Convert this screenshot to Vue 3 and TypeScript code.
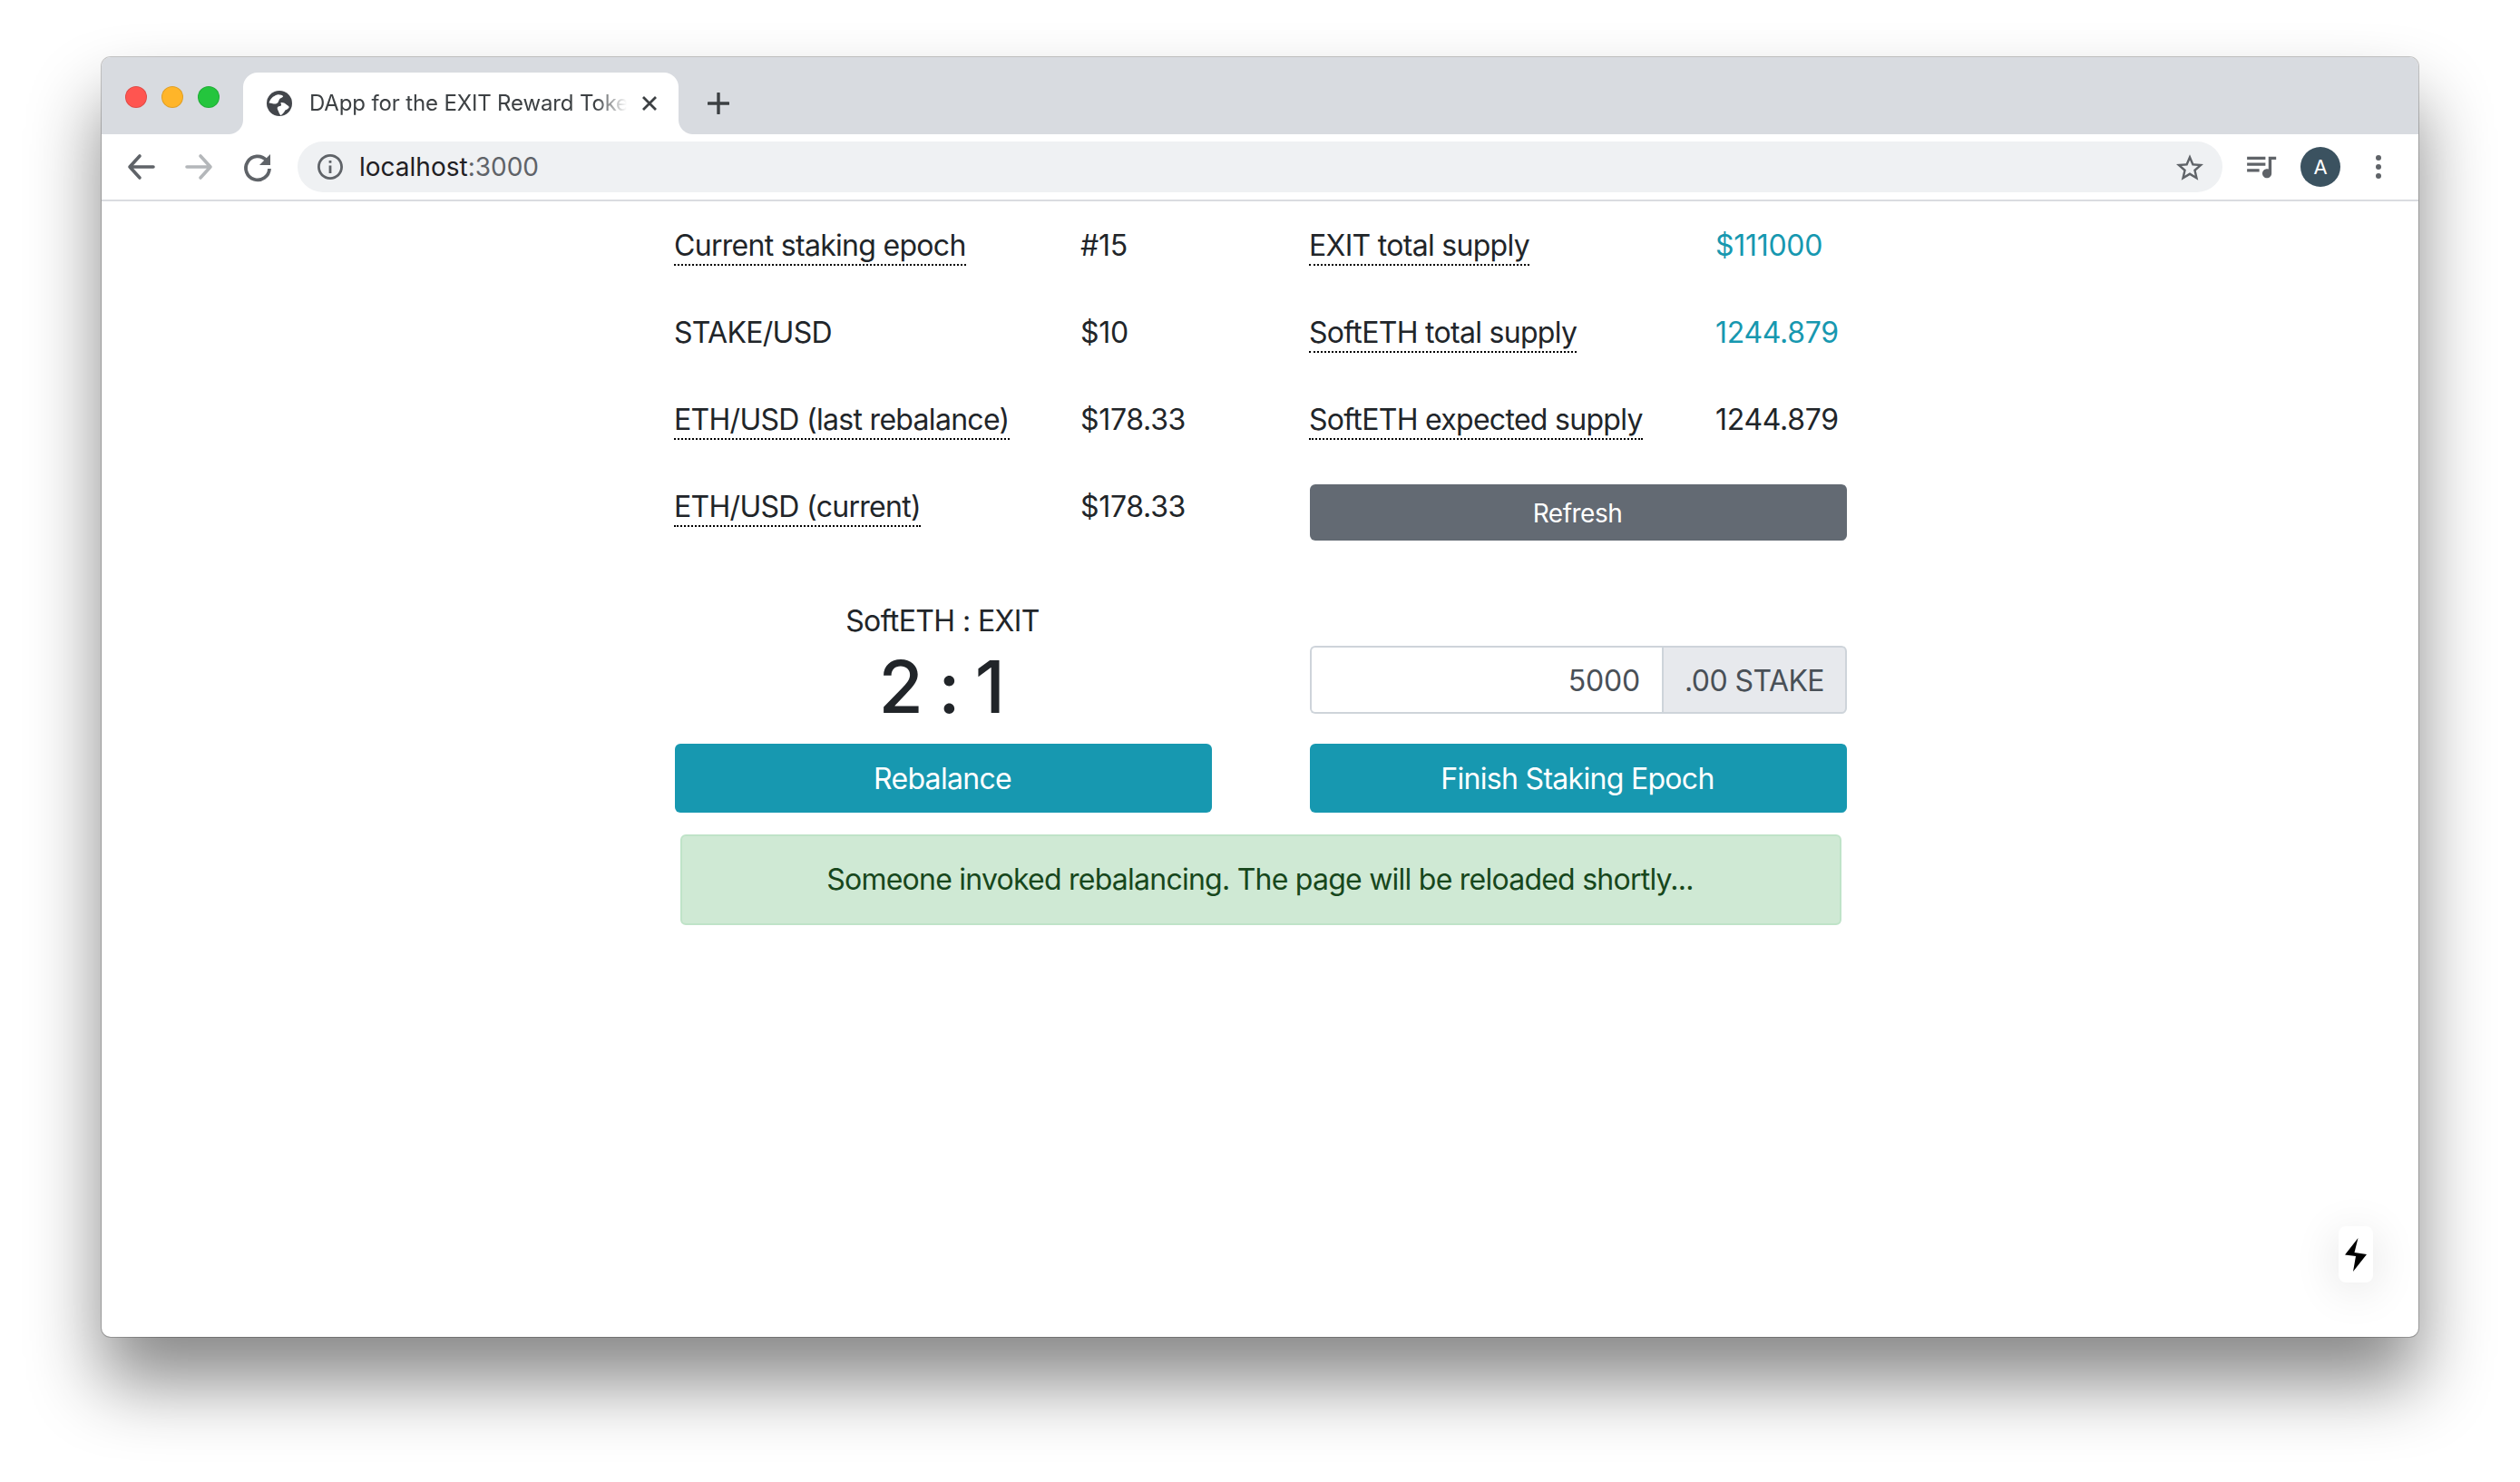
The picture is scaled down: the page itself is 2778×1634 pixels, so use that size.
<script setup lang="ts">
interface Stat { label: string; value: string; tip?: boolean; accent?: boolean }
const leftStats: Stat[] = [
  { label: 'Current staking epoch', value: '#15', tip: true },
  { label: 'STAKE/USD', value: '$10' },
  { label: 'ETH/USD (last rebalance)', value: '$178.33', tip: true },
  { label: 'ETH/USD (current)', value: '$178.33', tip: true },
]
const rightStats: Stat[] = [
  { label: 'EXIT total supply', value: '$111000', tip: true, accent: true },
  { label: 'SoftETH total supply', value: '1244.879', tip: true, accent: true },
  { label: 'SoftETH expected supply', value: '1244.879', tip: true },
]
</script>

<template>
  <div class="screen">
    <div class="window">
      <header class="strip">
        <div class="lights">
          <span class="light red"></span>
          <span class="light amber"></span>
          <span class="light green"></span>
        </div>
        <div class="tab">
          <svg class="globe" viewBox="0 0 28 28">
            <circle cx="14" cy="14" r="14" fill="#43464b"/>
            <path fill="#fff" d="M2.6 13.4C3.4 9.6 7 5.6 11.6 4.4c2.4-.4 5.6.4 6.6 1.8-1 1.6-3.2 1.8-4.2 3.2-.8 1.4-1 3.6-2.8 4.6-1.6.8-3.4.6-4.6.2-1.4-.6-2.6-.8-4 -.8z"/>
            <path fill="#fff" d="M15.6 13c2.2-.4 4.4.6 5.8 2 1.2 1 2.4 1.6 3.4 3-.8 1.8-2.6 3-4.4 3.6-.8 1.8-2.6 4.4-5 5.6-1.4-1.4-2-3.6-2.8-5.2-.8-1.6-1.4-3.2-.2-4.2 1.2-1 3.2-.6 3.6-1.8.2-1 -.8-1.8-.4-3z"/>
          </svg>
          <span class="title">DApp for the EXIT Reward Toke</span>
          <svg class="close" viewBox="0 0 20 20"><path d="M3 3l14 14M17 3L3 17" stroke="#3c4043" stroke-width="2.8" fill="none"/></svg>
        </div>
        <svg class="plus" viewBox="0 0 24 24"><path d="M12 1v22M1 12h22" stroke="#3c4043" stroke-width="3.4" stroke-linecap="round" fill="none"/></svg>
      </header>

      <nav class="toolbar">
        <svg class="tool back" viewBox="0 0 36 36"><path d="M32 18H6M17 6L6 18l11 12" stroke="#5f6368" stroke-width="3.6" fill="none" stroke-linecap="round" stroke-linejoin="round"/></svg>
        <svg class="tool forward" viewBox="0 0 36 36"><path d="M4 18h26M19 6l11 12-11 12" stroke="#b4b7ba" stroke-width="3.6" fill="none" stroke-linecap="round" stroke-linejoin="round"/></svg>
        <svg class="tool reload" viewBox="0 0 36 36"><path d="M27.5 10.5A13 13 0 1 0 31 20" stroke="#5f6368" stroke-width="3.8" fill="none"/><path d="M32 4v12H20z" fill="#5f6368"/></svg>
        <div class="omnibox">
          <svg class="info" viewBox="2 2 20 20"><path fill="#5f6368" d="M11 7h2v2h-2zm0 4h2v6h-2zm1-9C6.48 2 2 6.48 2 12s4.48 10 10 10 10-4.48 10-10S17.52 2 12 2zm0 18c-4.41 0-8-3.59-8-8s3.59-8 8-8 8 3.59 8 8-3.59 8-8 8z"/></svg>
          <span class="url">localhost<span class="port">:3000</span></span>
          <svg class="star" viewBox="2 2 20 19"><path fill="#5f6368" d="M22 9.24l-7.19-.62L12 2 9.19 8.63 2 9.24l5.46 4.73L5.82 21 12 17.27 18.18 21l-1.63-7.03L22 9.24zM12 15.4l-3.76 2.27 1-4.28-3.32-2.88 4.38-.38L12 6.1l1.71 4.04 4.38.38-3.32 2.88 1 4.28L12 15.4z"/></svg>
        </div>
        <svg class="tool media" viewBox="3 5 20 16"><path fill="#5f6368" d="M15 6H3v2h12V6zm0 4H3v2h12v-2zM3 16h8v-2H3v2zM17 6v8.18c-.31-.11-.65-.18-1-.18-1.66 0-3 1.34-3 3s1.34 3 3 3 3-1.34 3-3V8h3V6h-5z"/></svg>
        <div class="avatar">A</div>
        <div class="menu"><i></i><i></i><i></i></div>
      </nav>

      <main class="page">
        <div class="columns">
          <section>
            <div v-for="s in leftStats" :key="s.label" class="stat">
              <div><span class="label" :class="{ tip: s.tip }">{{ s.label }}</span></div>
              <div class="value">{{ s.value }}</div>
            </div>
          </section>
          <section>
            <div v-for="s in rightStats" :key="s.label" class="stat">
              <div><span class="label" :class="{ tip: s.tip }">{{ s.label }}</span></div>
              <div class="value" :class="{ accent: s.accent }">{{ s.value }}</div>
            </div>
            <button class="btn refresh">Refresh</button>
          </section>
        </div>

        <div class="columns actions">
          <section class="action">
            <div class="ratio-label">SoftETH : EXIT</div>
            <div class="ratio">2 : 1</div>
            <button class="btn primary">Rebalance</button>
          </section>
          <section class="action">
            <div class="group">
              <input class="amount" value="5000" readonly />
              <span class="addon">.00 STAKE</span>
            </div>
            <button class="btn primary">Finish Staking Epoch</button>
          </section>
        </div>

        <div class="alert">Someone invoked rebalancing. The page will be reloaded shortly...</div>
      </main>

      <div class="bolt">
        <svg viewBox="0 0 24 37" width="24" height="37"><path d="M14.5 0L10.5 16 24 18 9 37 12 20 0 18.5z" fill="#000"/></svg>
      </div>
    </div>
  </div>
</template>

<style>
html, body { margin: 0; background: #fff; }
</style>

<style scoped>
.screen {
  width: 2778px;
  height: 1634px;
  box-sizing: border-box;
  padding: 63px 112px 160px;
  background: #fff;
  overflow: hidden;
  font-family: Inter, "Liberation Sans", sans-serif;
  color: #212529;
}
.window {
  position: relative;
  height: 1411px;
  display: flex;
  flex-direction: column;
  background: #fff;
  border-radius: 10px;
  box-shadow: 0 0 0 1px rgba(0, 0, 0, 0.22), 0 50px 80px rgba(0, 0, 0, 0.47);
}
.strip {
  height: 85px;
  flex: none;
  display: flex;
  align-items: flex-end;
  background: #d8dbe0;
  border-radius: 10px 10px 0 0;
}
.lights {
  display: flex;
  gap: 16px;
  padding-left: 26px;
  align-self: flex-start;
  margin-top: 32px;
}
.light { width: 24px; height: 24px; border-radius: 50%; box-sizing: border-box; border: 1px solid rgba(0, 0, 0, 0.12); }
.red { background: #ff5550; }
.amber { background: #ffb529; }
.green { background: #24c53d; }
.tab {
  position: relative;
  width: 480px;
  height: 68px;
  margin-left: 26px;
  display: flex;
  align-items: center;
  box-sizing: border-box;
  padding-left: 26px;
  background: #fff;
  border-radius: 16px 16px 0 0;
}
.tab::before, .tab::after {
  content: "";
  position: absolute;
  bottom: 0;
  width: 16px;
  height: 16px;
}
.tab::before { left: -16px; background: radial-gradient(circle at 0 0, #d8dbe0 15.5px, #fff 16.5px); }
.tab::after { right: -16px; background: radial-gradient(circle at 100% 0, #d8dbe0 15.5px, #fff 16.5px); }
.globe { width: 28px; height: 28px; flex: none; }
.title {
  width: 350px;
  margin-left: 19px;
  font-size: 24px;
  line-height: 30px;
  letter-spacing: -0.15px;
  white-space: nowrap;
  color: #3c4043;
  -webkit-mask-image: linear-gradient(to right, #000 90%, transparent 100%);
  mask-image: linear-gradient(to right, #000 90%, transparent 100%);
}
.close { width: 20px; height: 20px; margin-left: 15px; flex: none; }
.plus { width: 24px; height: 24px; margin-left: 32px; margin-bottom: 22px; flex: none; }

.toolbar {
  height: 72px;
  flex: none;
  display: flex;
  align-items: center;
  padding: 0 26px 0 25px;
  border-bottom: 2px solid #dadce0;
}
.tool { width: 36px; height: 36px; flex: none; }
.forward { margin-left: 29px; }
.reload { margin-left: 28px; }
.media { width: 36px; height: 27px; margin-left: 26px; }
.omnibox {
  flex: 1;
  height: 56px;
  margin-left: 26px;
  display: flex;
  align-items: center;
  padding: 0 21px 0 22px;
  background: #eff1f3;
  border-radius: 28px;
}
.info { width: 28px; height: 28px; flex: none; }
.url { flex: 1; margin-left: 18px; font-size: 28px; color: #1f2023; }
.port { color: #5f6368; }
.star { width: 30px; height: 29px; flex: none; }
.avatar {
  width: 44px;
  height: 44px;
  margin-left: 24px;
  border-radius: 50%;
  background: #3b5260;
  color: #fff;
  font-size: 22px;
  display: flex;
  align-items: center;
  justify-content: center;
}
.menu {
  width: 36px;
  margin-left: 24px;
  display: flex;
  flex-direction: column;
  align-items: center;
  gap: 4px;
}
.menu i { width: 6px; height: 6px; border-radius: 50%; background: #5f6368; }

.page { flex: 1; padding-top: 25px; font-size: 32px; line-height: 48px; }
.columns {
  width: 1292px;
  margin-left: 632px;
  display: grid;
  grid-template-columns: 592px 592px;
  column-gap: 108px;
}
.stat {
  display: grid;
  grid-template-columns: 448px 1fr;
  margin: 0 0 48px -1px;
}
.label { letter-spacing: -0.7px; }
.value { letter-spacing: -0.3px; }
.tip { border-bottom: 2px dotted #000; padding-bottom: 1px; }
.accent { color: #1798b0; }
.btn {
  display: block;
  width: 100%;
  border: 0;
  border-radius: 6px;
  color: #fff;
  font: inherit;
  letter-spacing: -0.7px;
  padding: 2px 2px 0 0;
}
.refresh {
  height: 62px;
  margin-top: -1px;
  background: #636a73;
  font-size: 28px;
  letter-spacing: -0.5px;
}
.primary { height: 76px; background: #1798b0; }
.actions { margin-top: 30px; }
.action { display: flex; flex-direction: column; justify-content: flex-end; align-items: stretch; }
.ratio-label { text-align: center; letter-spacing: -0.6px; padding-right: 2px; }
.ratio { height: 111px; padding-right: 6px; font-size: 80px; font-weight: 500; letter-spacing: -2.5px; line-height: 96px; text-align: center; }
.group { display: flex; height: 75px; margin-bottom: 33px; color: #495057; }
.amount {
  flex: 1;
  min-width: 0;
  box-sizing: border-box;
  padding: 2px 24px 0;
  border: 2px solid #ced4da;
  border-right: 0;
  border-radius: 6px 0 0 6px;
  background: #fff;
  color: #495057;
  font: inherit;
  letter-spacing: -0.2px;
  text-align: right;
  outline: none;
}
.addon {
  width: 204px;
  box-sizing: border-box;
  padding-top: 2px;
  display: flex;
  align-items: center;
  justify-content: center;
  letter-spacing: -0.55px;
  border: 2px solid #ced4da;
  border-radius: 0 6px 6px 0;
  background: #e7e9ed;
}
.alert {
  width: 1280px;
  height: 100px;
  margin: 24px 0 0 638px;
  box-sizing: border-box;
  padding-right: 2px;
  display: flex;
  align-items: center;
  justify-content: center;
  letter-spacing: -0.76px;
  background: #cfe9d4;
  border: 2px solid #bfe3c8;
  border-radius: 6px;
  color: #17471c;
}
.bolt {
  position: absolute;
  right: 50px;
  bottom: 60px;
  width: 38px;
  height: 62px;
  display: flex;
  align-items: center;
  justify-content: center;
  background: #fff;
  border-radius: 8px;
  box-shadow: 0 8px 50px rgba(0, 0, 0, 0.12);
}
</style>
